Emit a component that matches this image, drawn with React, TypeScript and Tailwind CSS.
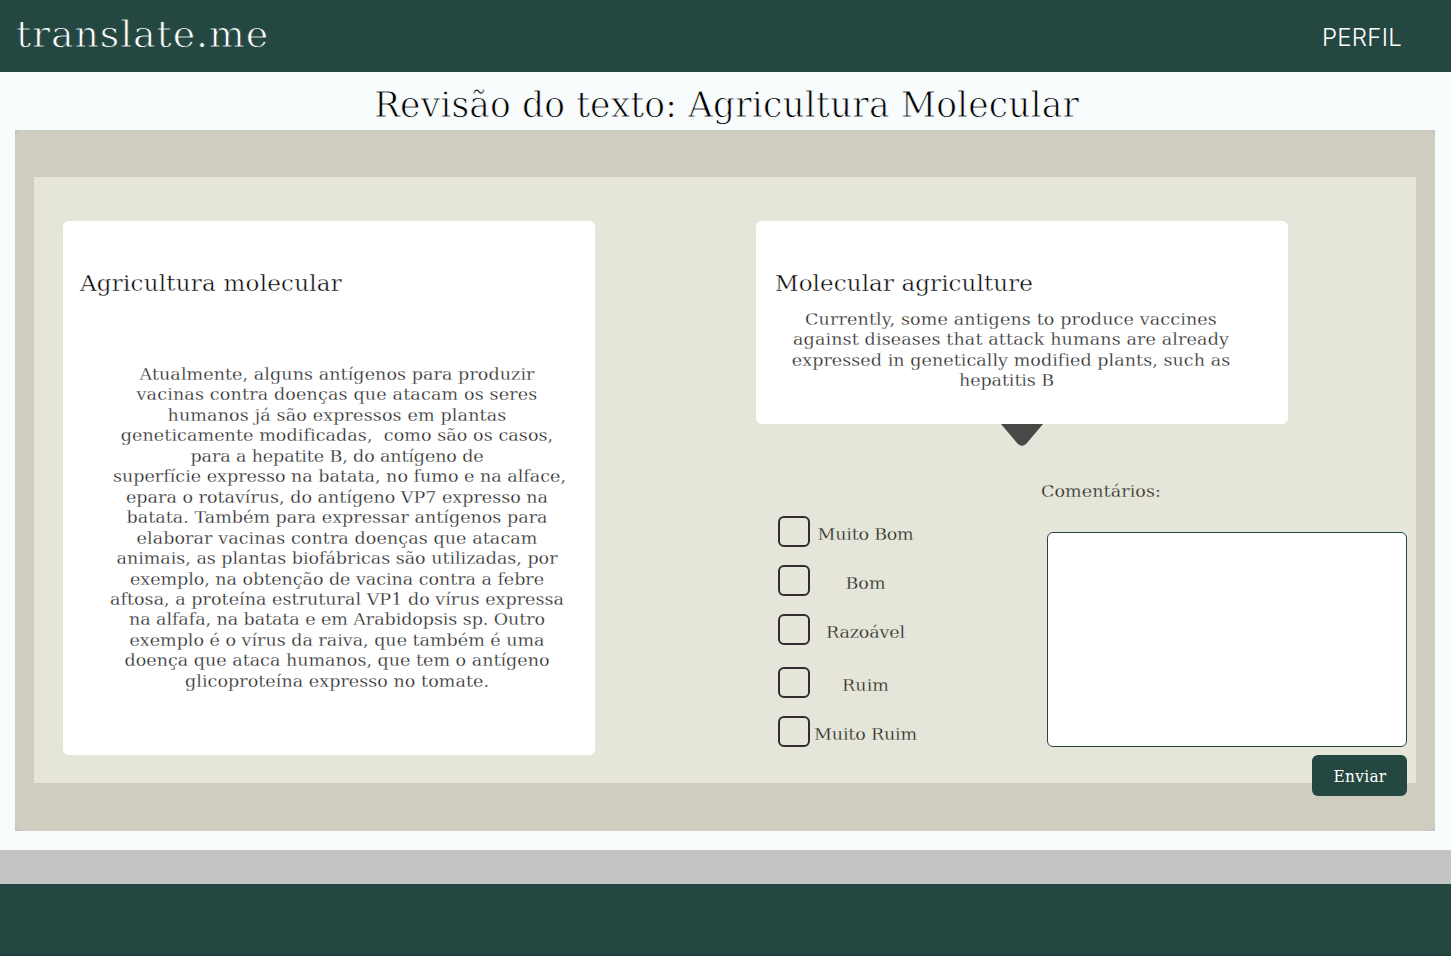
import { useLayoutEffect, useRef, useState } from "react";

/** One line of text whose tracking is adjusted so that it spans `width` pixels. */
function Line({ text, width, className = "" }: { text: string; width: number; className?: string }) {
  const ref = useRef<HTMLSpanElement>(null);
  const [tracking, setTracking] = useState(0);
  useLayoutEffect(() => {
    const el = ref.current;
    if (!el) return;
    el.style.letterSpacing = "0px";
    const natural = el.getBoundingClientRect().width;
    const value = (width - natural) / text.length;
    el.style.letterSpacing = `${value}px`;
    setTracking(value);
  }, [text, width]);
  return (
    <span className={`block ${className}`}>
      <span ref={ref} className="inline-block whitespace-pre" style={{ letterSpacing: `${tracking}px` }}>
        {text}
      </span>
    </span>
  );
}

const original: [string, number, string?][] = [
  ["Atualmente, alguns antígenos para produzir", 395],
  ["vacinas contra doenças que atacam os seres", 401],
  ["humanos já são expressos em plantas", 339],
  ["geneticamente modificadas,  como são os casos,", 432],
  ["para a hepatite B, do antígeno de", 293],
  ["superfície expresso na batata, no fumo e na alface,", 453, "pl-[5px]"],
  ["epara o rotavírus, do antígeno VP7 expresso na", 422],
  ["batata. Também para expressar antígenos para", 421],
  ["elaborar vacinas contra doenças que atacam", 401],
  ["animais, as plantas biofábricas são utilizadas, por", 441],
  ["exemplo, na obtenção de vacina contra a febre", 414],
  ["aftosa, a proteína estrutural VP1 do vírus expressa", 454],
  ["na alfafa, na batata e em Arabidopsis sp. Outro", 416],
  ["exemplo é o vírus da raiva, que também é uma", 415],
  ["doença que ataca humanos, que tem o antígeno", 425],
  ["glicoproteína expresso no tomate.", 304],
];

const translated: [string, number, string?][] = [
  ["Currently, some antigens to produce vaccines", 412],
  ["against diseases that attack humans are already", 436],
  ["expressed in genetically modified plants, such as", 438],
  ["hepatitis B", 95, "pr-[9px]"],
];

const ratings: [string, number, string][] = [
  ["Muito Bom", 96, "mb-[18px]"],
  ["Bom", 40, "mb-[18px]"],
  ["Razoável", 79, "mb-[22px]"],
  ["Ruim", 47, "mb-[18px]"],
  ["Muito Ruim", 103, ""],
];

export default function App() {
  return (
    <div className="flex h-[956px] w-[1451px] flex-col overflow-hidden bg-[#f8fcfd] font-['DejaVu_Serif',serif] text-black">
      <header className="flex h-[72px] shrink-0 items-start justify-between bg-[#244741] pl-[16px] pr-[49px] text-white">
        <Line text="translate.me" width={253} className="pt-[9px] text-[38px] leading-[50px] [-webkit-text-stroke:0.9px_#244741]" />
        <Line
          text="PERFIL"
          width={80}
          className="pt-[21.5px] font-['Inter','Lato',sans-serif] text-[24px] leading-[32px] font-light"
        />
      </header>

      <h1 className="flex h-[58px] shrink-0 justify-center pt-[8px] pl-[2px]">
        <Line
          text="Revisão do texto: Agricultura Molecular"
          width={705}
          className="text-[34.5px] leading-[51px] [-webkit-text-stroke:0.85px_#f8fcfd]"
        />
      </h1>

      <main className="mx-[15px] h-[701px] w-[1420px] shrink-0 bg-[#c4c4c4]">
        <div className="h-full rounded-lg bg-[#cfccc0] px-[19px] pt-[47px]">
          <div className="flex h-[606px] gap-[161px] bg-[#e5e6d9] pt-[44px] pr-[9px] pl-[29px]">
            <section className="h-[534px] w-[532px] shrink-0 rounded-md bg-white pt-[47px]">
              <Line
                text="Agricultura molecular"
                width={262}
                className="pl-[17px] text-[23px] leading-[30px] [-webkit-text-stroke:0.45px_#fff]"
              />
              <div className="mt-[66px] pl-[16px] text-center text-[17.5px] leading-[20.45px] text-[#222] [-webkit-text-stroke:0.28px_#fff]">
                {original.map(([text, width, className]) => (
                  <Line key={text} text={text} width={width} className={className} />
                ))}
              </div>
            </section>

            <div className="w-[651px] shrink-0">
              <section className="h-[203px] w-[532px] rounded-md bg-white pt-[47px]">
                <Line
                  text="Molecular agriculture"
                  width={258}
                  className="pl-[19px] text-[23px] leading-[30px] [-webkit-text-stroke:0.45px_#fff]"
                />
                <div className="mt-[11px] pr-[22px] text-center text-[17.5px] leading-[20.35px] text-[#222] [-webkit-text-stroke:0.28px_#fff]">
                  {translated.map(([text, width, className]) => (
                    <Line key={text} text={text} width={width} className={className} />
                  ))}
                </div>
              </section>
              <svg className="ml-[245px] block h-[22px] w-[42px]" viewBox="0 0 42 22" aria-hidden="true">
                <path d="M0 0H42L25.5 19.5Q21 24 16.5 19.5Z" fill="#4a4747" />
              </svg>

              <div className="flex justify-between pl-[22px] text-[17.5px] leading-[20px] text-[#222] [-webkit-text-stroke:0.28px_#e5e6d9]">
                <div className="pt-[70px]">
                  {ratings.map(([text, width, gap]) => (
                    <label key={text} className={`flex h-[31px] ${gap}`}>
                      <input
                        type="checkbox"
                        className="h-[31px] w-[32px] shrink-0 appearance-none rounded-md border-2 border-[#312d2d]"
                      />
                      <Line text={text} width={width} className="w-[111px] pt-[8px] text-center" />
                    </label>
                  ))}
                </div>
                <div className="flex w-[366px] flex-col items-end pt-[35px]">
                  <Line text="Comentários:" width={120} className="w-full" />
                  <textarea className="mt-[31px] block h-[215px] w-[360px] resize-none rounded-md border border-[#244741] bg-white" />
                  <button className="mt-[8px] flex h-[41px] w-[95px] shrink-0 justify-center rounded-md bg-[#244741] pt-[11px] font-['DejaVu_Serif_Condensed','DejaVu_Serif',serif] text-[17px] leading-[20px] text-white [-webkit-text-stroke:0px] [font-stretch:condensed]">
                    <Line text="Enviar" width={53} className="pl-px" />
                  </button>
                </div>
              </div>
            </div>
          </div>
        </div>
      </main>

      <div className="mt-[19px] h-[34px] shrink-0 bg-[#c4c4c4]" />
      <footer className="h-[72px] shrink-0 border-b border-[#1f3d38] bg-[#244741]" />
    </div>
  );
}
